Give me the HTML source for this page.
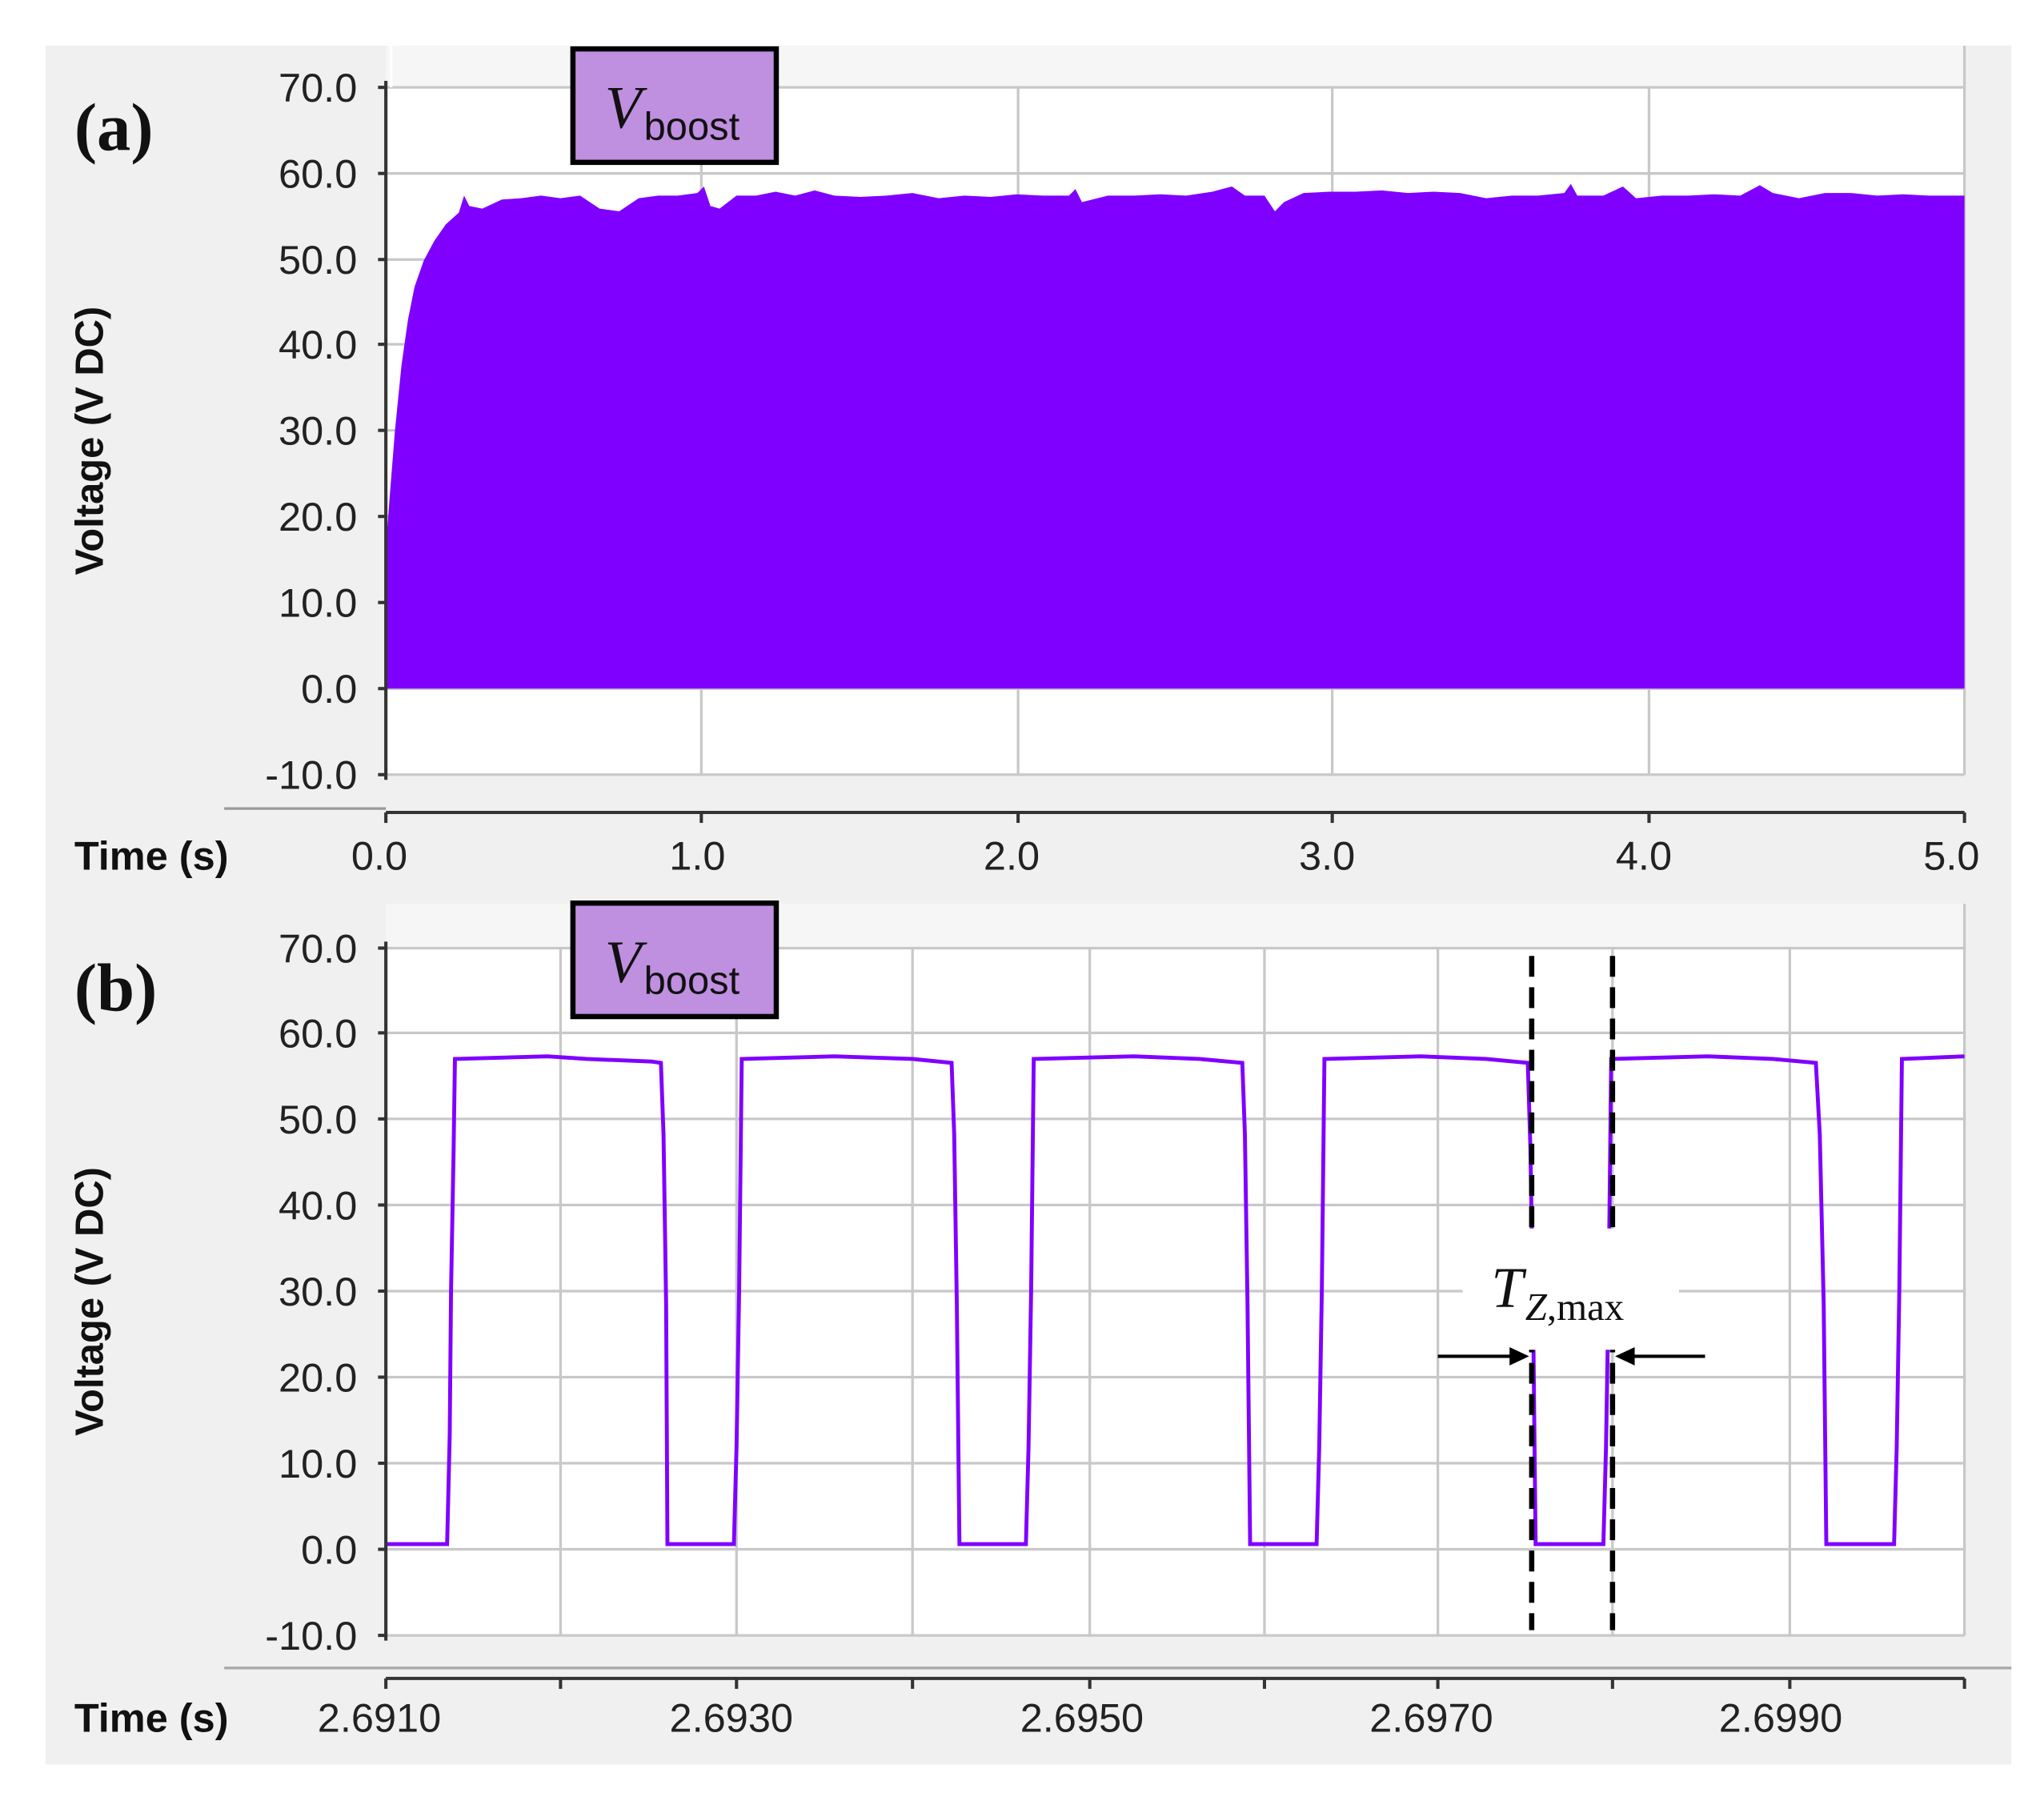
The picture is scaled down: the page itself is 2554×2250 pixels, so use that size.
<!DOCTYPE html>
<html><head><meta charset="utf-8"><style>
html,body{margin:0;padding:0;background:#fff;}
svg{display:block}
</style></head><body>
<svg width="2554" height="2250" viewBox="0 0 1568 1381" preserveAspectRatio="none" xmlns="http://www.w3.org/2000/svg">
<rect x="0" y="0" width="1568" height="1381" fill="#fff"/>
<rect x="35" y="35" width="1508" height="1318" fill="#f0f0f0"/>
<!-- ========== Plot A ========== -->
<rect x="296" y="35" width="1211" height="32" fill="#f6f6f6"/>
<rect x="296" y="67" width="1211" height="527" fill="#fff"/>
<g stroke="#c8c8c8" stroke-width="2">
<line x1="296" y1="67" x2="1507" y2="67"/><line x1="296" y1="133" x2="1507" y2="133"/>
<line x1="296" y1="199" x2="1507" y2="199"/><line x1="296" y1="264" x2="1507" y2="264"/>
<line x1="296" y1="330" x2="1507" y2="330"/><line x1="296" y1="396" x2="1507" y2="396"/>
<line x1="296" y1="462" x2="1507" y2="462"/><line x1="296" y1="528" x2="1507" y2="528"/>
<line x1="296" y1="594" x2="1507" y2="594"/>
<line x1="538" y1="67" x2="538" y2="594"/><line x1="781" y1="67" x2="781" y2="594"/>
<line x1="1022" y1="67" x2="1022" y2="594"/><line x1="1265" y1="67" x2="1265" y2="594"/>
<line x1="1507" y1="35" x2="1507" y2="594"/><line x1="300" y1="35" x2="300" y2="67" stroke="#fff"/>
</g>
<path fill="#7f00ff" d="M296,528 L296,420 L299,380 L303,330 L308,280 L313,245 L318,220 L325,200 L333,185 L342,172 L352,163 L356,150 L360,158 L370,160 L385,153 L400,152 L415,150 L430,152 L445,150 L460,160 L475,162 L490,152 L505,150 L520,150 L535,148 L540,143 L545,158 L552,160 L565,150 L580,150 L595,147 L610,150 L625,146 L640,150 L660,151 L680,150 L700,148 L720,152 L740,150 L760,151 L780,149 L800,150 L820,150 L825,145 L830,155 L850,150 L870,150 L890,149 L910,150 L930,147 L945,143 L955,150 L970,150 L978,162 L985,155 L1000,148 L1020,147 L1040,147 L1060,146 L1080,148 L1100,147 L1120,148 L1140,152 L1160,150 L1180,150 L1200,148 L1205,141 L1210,150 L1230,150 L1245,143 L1255,152 L1275,150 L1295,150 L1315,149 L1335,150 L1350,142 L1360,148 L1380,152 L1400,148 L1420,148 L1440,150 L1460,149 L1480,150 L1500,150 L1507,150 L1507,528 Z"/>
<g stroke="#333" stroke-width="2.5">
<line x1="296" y1="62" x2="296" y2="598"/>
<line x1="290" y1="67" x2="296" y2="67"/><line x1="290" y1="133" x2="296" y2="133"/><line x1="290" y1="199" x2="296" y2="199"/><line x1="290" y1="264" x2="296" y2="264"/><line x1="290" y1="330" x2="296" y2="330"/><line x1="290" y1="396" x2="296" y2="396"/><line x1="290" y1="462" x2="296" y2="462"/><line x1="290" y1="528" x2="296" y2="528"/><line x1="290" y1="594" x2="296" y2="594"/>
<line x1="296" y1="623" x2="1507" y2="623"/>
<line x1="296" y1="623" x2="296" y2="631"/><line x1="538" y1="623" x2="538" y2="631"/><line x1="781" y1="623" x2="781" y2="631"/><line x1="1022" y1="623" x2="1022" y2="631"/><line x1="1265" y1="623" x2="1265" y2="631"/><line x1="1507" y1="623" x2="1507" y2="631"/>
</g>
<line x1="172" y1="620" x2="296" y2="620" stroke="#999" stroke-width="2"/>
<g font-family="Liberation Sans, sans-serif" font-size="31" fill="#222" text-anchor="end">
<text x="274" y="78">70.0</text><text x="274" y="144">60.0</text><text x="274" y="210">50.0</text><text x="274" y="275">40.0</text><text x="274" y="341">30.0</text><text x="274" y="407">20.0</text><text x="274" y="473">10.0</text><text x="274" y="539">0.0</text><text x="274" y="605">-10.0</text>
</g>
<g font-family="Liberation Sans, sans-serif" font-size="31" fill="#222" text-anchor="middle">
<text x="291" y="667">0.0</text><text x="535" y="667">1.0</text><text x="776" y="667">2.0</text><text x="1018" y="667">3.0</text><text x="1261" y="667">4.0</text><text x="1497" y="667">5.0</text>
</g>
<text x="57" y="667" font-family="Liberation Sans, sans-serif" font-size="31" font-weight="bold" fill="#111">Time (s)</text>
<text transform="translate(79,338) rotate(-90)" text-anchor="middle" font-family="Liberation Sans, sans-serif" font-size="30" font-weight="bold" fill="#111">Voltage (V DC)</text>
<text x="57" y="115" font-family="Liberation Serif, serif" font-size="52" font-weight="bold" fill="#111">(a)</text>
<rect x="439.5" y="37.5" width="156" height="87" fill="#bf8fe0" stroke="#000" stroke-width="4"/>
<text x="464" y="98" font-family="Liberation Serif, serif" font-size="46" font-style="italic" fill="#111">V</text>
<text x="494" y="107" font-family="Liberation Sans, sans-serif" font-size="30" fill="#111">boost</text>
<!-- ========== Plot B ========== -->
<rect x="296" y="693" width="1211" height="34" fill="#f6f6f6"/>
<rect x="296" y="727" width="1211" height="527" fill="#fff"/>
<g stroke="#c8c8c8" stroke-width="2">
<line x1="296" y1="727" x2="1507" y2="727"/><line x1="296" y1="792" x2="1507" y2="792"/>
<line x1="296" y1="858" x2="1507" y2="858"/><line x1="296" y1="924" x2="1507" y2="924"/>
<line x1="296" y1="990" x2="1507" y2="990"/><line x1="296" y1="1056" x2="1507" y2="1056"/>
<line x1="296" y1="1122" x2="1507" y2="1122"/><line x1="296" y1="1188" x2="1507" y2="1188"/>
<line x1="296" y1="1254" x2="1507" y2="1254"/>
<line x1="430" y1="727" x2="430" y2="1254"/><line x1="565" y1="727" x2="565" y2="1254"/>
<line x1="700" y1="727" x2="700" y2="1254"/><line x1="836" y1="727" x2="836" y2="1254"/>
<line x1="970" y1="727" x2="970" y2="1254"/><line x1="1103" y1="727" x2="1103" y2="1254"/>
<line x1="1237" y1="727" x2="1237" y2="1254"/><line x1="1373" y1="727" x2="1373" y2="1254"/>
<line x1="1507" y1="693" x2="1507" y2="1254"/>
</g>
<path fill="none" stroke="#7f00ff" stroke-width="3" d="M296,1184 L343,1184 L345,1100 L346,990 L348,880 L349,812 L420,810 L450,812 L500,814 L507,815 L509,870 L511,1000 L512,1184 L563,1184 L565,1110 L567,990 L569,812 L640,810 L700,812 L730,815 L732,870 L734,1000 L736,1184 L787,1184 L789,1110 L791,990 L793,812 L870,810 L920,812 L953,815 L955,870 L957,1000 L959,1184 L1010,1184 L1012,1110 L1014,990 L1016,812 L1090,810 L1140,812 L1172,815 L1174,880 L1176,1000 L1178,1184 L1230,1184 L1232,1110 L1234,990 L1236,812 L1310,810 L1360,812 L1393,815 L1396,870 L1399,1000 L1401,1184 L1453,1184 L1455,1110 L1457,990 L1459,812 L1507,810"/>
<g stroke="#000" stroke-width="4" stroke-dasharray="16 8">
<line x1="1175" y1="733" x2="1175" y2="1250"/><line x1="1237" y1="733" x2="1237" y2="1250"/>
</g>
<rect x="1122" y="942" width="166" height="93" fill="#fff"/>
<text x="1144" y="1002" font-family="Liberation Serif, serif" font-size="44" font-style="italic" fill="#111">T</text>
<text x="1170" y="1012" font-family="Liberation Serif, serif" font-size="30" fill="#111"><tspan font-style="italic">Z</tspan>,max</text>
<g stroke="#000" stroke-width="2.5" fill="#000">
<line x1="1103" y1="1040" x2="1162" y2="1040"/><path d="M1173,1040 L1158,1033 L1158,1047 Z" stroke="none"/>
<line x1="1250" y1="1040" x2="1308" y2="1040"/><path d="M1239,1040 L1254,1033 L1254,1047 Z" stroke="none"/>
</g>
<g stroke="#333" stroke-width="2.5">
<line x1="296" y1="722" x2="296" y2="1258"/>
<line x1="290" y1="727" x2="296" y2="727"/><line x1="290" y1="792" x2="296" y2="792"/><line x1="290" y1="858" x2="296" y2="858"/><line x1="290" y1="924" x2="296" y2="924"/><line x1="290" y1="990" x2="296" y2="990"/><line x1="290" y1="1056" x2="296" y2="1056"/><line x1="290" y1="1122" x2="296" y2="1122"/><line x1="290" y1="1188" x2="296" y2="1188"/><line x1="290" y1="1254" x2="296" y2="1254"/>
<line x1="296" y1="1287" x2="1507" y2="1287"/>
<line x1="296" y1="1287" x2="296" y2="1295"/><line x1="430" y1="1287" x2="430" y2="1295"/><line x1="565" y1="1287" x2="565" y2="1295"/><line x1="700" y1="1287" x2="700" y2="1295"/><line x1="836" y1="1287" x2="836" y2="1295"/><line x1="970" y1="1287" x2="970" y2="1295"/><line x1="1103" y1="1287" x2="1103" y2="1295"/><line x1="1237" y1="1287" x2="1237" y2="1295"/><line x1="1373" y1="1287" x2="1373" y2="1295"/><line x1="1507" y1="1287" x2="1507" y2="1295"/>
</g>
<line x1="172" y1="1279" x2="1543" y2="1279" stroke="#aaa" stroke-width="2"/>
<g font-family="Liberation Sans, sans-serif" font-size="31" fill="#222" text-anchor="end">
<text x="274" y="738">70.0</text><text x="274" y="803">60.0</text><text x="274" y="869">50.0</text><text x="274" y="935">40.0</text><text x="274" y="1001">30.0</text><text x="274" y="1067">20.0</text><text x="274" y="1133">10.0</text><text x="274" y="1199">0.0</text><text x="274" y="1265">-10.0</text>
</g>
<g font-family="Liberation Sans, sans-serif" font-size="31" fill="#222" text-anchor="middle">
<text x="291" y="1328">2.6910</text><text x="561" y="1328">2.6930</text><text x="830" y="1328">2.6950</text><text x="1098" y="1328">2.6970</text><text x="1366" y="1328">2.6990</text>
</g>
<text x="57" y="1328" font-family="Liberation Sans, sans-serif" font-size="31" font-weight="bold" fill="#111">Time (s)</text>
<text transform="translate(79,998) rotate(-90)" text-anchor="middle" font-family="Liberation Sans, sans-serif" font-size="30" font-weight="bold" fill="#111">Voltage (V DC)</text>
<text x="57" y="775" font-family="Liberation Serif, serif" font-size="52" font-weight="bold" fill="#111">(b)</text>
<rect x="439.5" y="692.5" width="156" height="87" fill="#bf8fe0" stroke="#000" stroke-width="4"/>
<text x="464" y="753" font-family="Liberation Serif, serif" font-size="46" font-style="italic" fill="#111">V</text>
<text x="494" y="762" font-family="Liberation Sans, sans-serif" font-size="30" fill="#111">boost</text>
</svg>
</body></html>
